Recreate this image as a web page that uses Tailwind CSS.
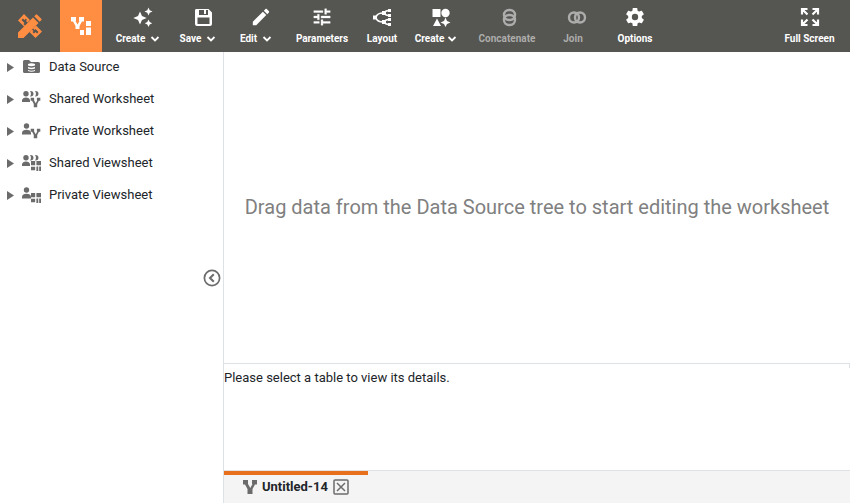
<!DOCTYPE html>
<html lang="en">
<head>
<meta charset="utf-8">
<title>Untitled-14</title>
<script src="https://cdn.jsdelivr.net/npm/@tailwindcss/browser@4"></script>
</head>
<body class="flex h-screen flex-col overflow-hidden bg-white font-[Roboto,sans-serif] text-[13px] leading-5 text-[#212529]">
<svg class="hidden">
  <symbol id="chev" viewBox="0 0 10 6"><path d="M1.500 1 5 4.500 8.500 1" fill="none" stroke="currentColor" stroke-width="1.800"/></symbol>
  <symbol id="person" viewBox="0 0 20 18"><circle cx="4.500" cy="4" r="2.700"/><path d="M0 12.500V11C0 8.800 2 7.800 4.500 7.800S9 8.800 9 11v1.500z"/></symbol>
  <symbol id="people" viewBox="0 0 20 18"><circle cx="4" cy="3.800" r="2.700"/><path d="M0 12v-1.500C0 8.500 2 7.500 4 7.500s4 1 4 3V12zM8 1c2.500-.2 3.500 1 3.500 2.700S10.500 6.600 8 6.400C9.300 5 9.300 2.500 8 1zM13 1c2.500-.2 3.500 1 3.500 2.700s-1 2.900-3.500 2.700c1.300-1.400 1.300-3.900 0-5.400z"/></symbol>
  <symbol id="nodes" viewBox="0 0 16 16"><path d="M1 1h5v4L8.300 9 10.500 5H10V1h5v4.500h-2L10.500 10v5h-5v-5L3 5.500H1z"/></symbol>
  <symbol id="blocks" viewBox="0 0 12 12"><path d="M0 0h5v5H0zM6.500 0H12v5H6.500zM0 7h5v4H0zM6.500 6.500h2.200V12H6.500zM9.800 6.500H12V12H9.800z"/></symbol>
</svg>

<header class="flex h-[52px] shrink-0 bg-[#555552] text-[10px] leading-4 font-bold text-white">
  <a href="#portal" aria-label="Composer home" class="flex w-[60px] items-center justify-center text-[#ff8d42]">
    <svg class="size-6" viewBox="0 0 24 24" fill="currentColor">
      <path d="M6 0 12 6 9.500 8.500 8 7 9 6 7.800 4.800 6.500 6 5 4.500 3.500 6 6.500 9 5.500 10 7 11.500 6 12.500 0 6.500z"/>
      <path d="M18 11.500 24 17.500 17.500 24 11.500 18 14 15.500 15.500 17 14.500 18 16 19.500 17.500 18 19 19.500 20.500 18 17.500 15 16.500 16 15 14.500z"/>
      <path d="M0 24v-5.500L15 3.500 20.500 9 5.500 24zM16.200 2.300l1.600-1.600q.7-.7 1.400 0l4.100 4.100q.7.700 0 1.400l-1.600 1.600z"/>
    </svg>
  </a>
  <button type="button" aria-label="Worksheet" class="flex w-[42px] items-center justify-center bg-[#ff8d42]">
    <svg class="h-[18px] w-5" viewBox="0 0 20 18" fill="currentColor"><path d="M0 0h5v4H4.500L6.500 7.500 8.500 4H8V0h5v4.500h-2L8.500 9v3h-4V9L2 4.500H0zM15 4h5v5h-5zM15 10.500h5V18h-5zM9 13h4v5H9z"/></svg>
  </button>
  <nav aria-label="Worksheet tools" class="ml-[10px] flex">
    <button type="button" class="flex w-[62px] flex-col items-center gap-1 pt-[7px]">
      <svg class="size-5" viewBox="0 0 20 20" fill="currentColor"><path d="M7 4.500l2 4.500 4.700 2L9 13l-2 4.500L5 13 .300 11 5 9zM15.500.5l1.200 2.800 2.800 1.200-2.800 1.200-1.200 2.800-1.200-2.800-2.800-1.200 2.800-1.200zM15.500 12.500l1.200 2.500 2.500 1.200-2.500 1.200-1.200 2.500-1.200-2.500-2.500-1.200 2.500-1.200z"/></svg>
      <span class="flex items-center gap-[5px] pr-[10px]">Create <svg class="h-[6px] w-[10px]"><use href="#chev"/></svg></span>
    </button>
    <button type="button" class="flex w-[58px] flex-col items-center gap-1 pt-[7px]">
      <svg class="size-5" viewBox="0 0 20 20" fill="currentColor" fill-rule="evenodd"><path d="M3 2h12.500L19 5.500V17q0 2-2 2H4q-2 0-2-2V3.500Q2 2 3 2zM6 3v5h9V3h-2v4h-2V3zM4.500 10.500V17h12v-6.500z"/></svg>
      <span class="flex items-center gap-[5px] pr-[10px]">Save <svg class="h-[6px] w-[10px]"><use href="#chev"/></svg></span>
    </button>
    <button type="button" class="flex w-[58px] flex-col items-center gap-1 pt-[7px]">
      <svg class="size-5" viewBox="1 0 22 22" fill="currentColor"><path d="M20.710 6.040c.39-.39.39-1.040 0-1.410l-2.340-2.340c-.37-.39-1.020-.39-1.410 0l-1.840 1.830 3.750 3.750zM3 16.250V20h3.750L17.810 8.930l-3.750-3.750z"/></svg>
      <span class="flex items-center gap-[5px] pr-[10px]">Edit <svg class="h-[6px] w-[10px]"><use href="#chev"/></svg></span>
    </button>
    <button type="button" class="flex w-16 flex-col items-center gap-1 pt-[7px]">
      <svg class="size-5" viewBox="1 1 22 22" fill="currentColor"><path d="M3 17v2h6v-2zM3 5v2h10V5zm10 16v-2h8v-2h-8v-2h-2v6zM7 9v2H3v2h4v2h2V9zm14 4v-2H11v2zm-6-4h2V7h4V5h-4V3h-2z" stroke="currentColor" stroke-width=".4"/></svg>
      <span>Parameters</span>
    </button>
    <button type="button" class="flex w-14 flex-col items-center gap-1 pt-[7px]">
      <svg class="size-5" viewBox="0 0 20 20" fill="currentColor"><path d="M1 8.500h4v4H1zM10 4h4v4h-4zM10 13h4v4h-4zM16 2h3v3h-3zM16 7h3v3h-3zM16 11h3v3h-3zM16 16h3v3h-3z"/><path d="M4 10C5 7 8 6 11 6M4 11c1 3 4 4 7 4M13 6c0-2 1-2.500 4-2.500M13 6c0 2 1 2.500 4 2.500M13 15c0-2 1-2.500 4-2.500M13 15c0 2 1 2.500 4 2.500" fill="none" stroke="currentColor" stroke-width="1.600"/></svg>
      <span>Layout</span>
    </button>
    <button type="button" class="flex w-[62px] flex-col items-center gap-1 pt-[7px]">
      <svg class="size-5" viewBox="0 0 20 20" fill="currentColor"><path d="M1.500 2h8v8h-8zM6 11.500l4 7.500H2zM14.500 10.500l1.500 3.500 3.500 1.500L16 17l-1.500 3-1.500-3-3.500-1.500L13 14z"/><circle cx="14.500" cy="6" r="4.200"/></svg>
      <span class="flex items-center gap-[3px] pr-[10px]">Create <svg class="h-[6px] w-[10px]"><use href="#chev"/></svg></span>
    </button>
    <button type="button" disabled class="flex w-[70px] flex-col items-center gap-1 pt-[7px] text-[#adadab]">
      <svg class="ml-1 size-5" viewBox="0 0 20 20" fill="none" stroke="currentColor" stroke-width="2.400"><rect x="5" y="3" width="11" height="10" rx="5"/><rect x="5" y="8" width="11" height="10" rx="5"/></svg>
      <span>Concatenate</span>
    </button>
    <button type="button" disabled class="flex w-[62px] flex-col items-center gap-1 pt-[7px] text-[#adadab]">
      <svg class="ml-2 size-5" viewBox="0 0 20 20" fill="none" stroke="currentColor" stroke-width="2.400"><rect x="2" y="5.500" width="10" height="10" rx="5"/><rect x="8" y="5.500" width="10" height="10" rx="5"/></svg>
      <span>Join</span>
    </button>
    <button type="button" class="flex w-[62px] flex-col items-center gap-1 pt-[7px]">
      <svg class="size-5" viewBox="1 1 22 22" fill="currentColor"><path d="M12 15.500A3.500 3.500 0 0 1 8.500 12 3.500 3.500 0 0 1 12 8.500a3.500 3.500 0 0 1 3.500 3.500 3.500 3.500 0 0 1-3.500 3.500m7.430-2.530c.04-.32.070-.64.070-.97s-.03-.66-.07-1l2.110-1.630c.19-.15.24-.42.120-.64l-2-3.460c-.12-.22-.39-.31-.61-.22l-2.490 1c-.52-.39-1.060-.73-1.690-.98l-.37-2.650A.506.506 0 0 0 14 2h-4c-.25 0-.46.180-.5.420l-.37 2.650c-.63.250-1.170.590-1.690.980l-2.490-1c-.22-.09-.49 0-.61.220l-2 3.460c-.13.220-.07.490.120.640L4.570 11c-.04.340-.07.670-.07 1s.03.650.070.970l-2.110 1.660c-.19.150-.25.420-.12.640l2 3.460c.12.220.39.300.61.220l2.490-1.010c.52.400 1.060.740 1.690.990l.37 2.650c.04.240.250.420.5.420h4c.25 0 .46-.18.500-.42l.37-2.650c.63-.26 1.170-.59 1.690-.99l2.490 1.010c.22.080.49 0 .61-.22l2-3.460c.12-.22.070-.49-.12-.64z"/></svg>
      <span>Options</span>
    </button>
  </nav>
  <button type="button" class="ml-auto flex w-[81px] flex-col items-center gap-1 pt-[7px]">
    <svg class="size-5" viewBox="0 1 20 20" fill="none" stroke="currentColor" stroke-width="2.200"><path d="M2 8.500V3h5.500M12.500 3H18v5.500M18 13.500V19h-5.500M7.500 19H2v-5.500M2 3l5.500 5.500M18 3l-5.500 5.500M18 19l-5.500-5.500M2 19l5.500-5.500"/></svg>
    <span>Full Screen</span>
  </button>
</header>

<main class="flex min-h-0 flex-1">
  <aside class="flex w-[224px] shrink-0 border-r border-[#dee2e6]">
    <ul class="flex-1 -mt-px whitespace-nowrap [&_button]:flex [&_button]:h-8 [&_button]:w-full [&_button]:items-center [&_button]:gap-[7px] [&_button]:pl-[7px]">
      <li><button type="button"><svg class="h-[9px] w-2" viewBox="0 0 8 9" fill="#6b6b6b"><path d="M0 0l7 4.500L0 9z"/></svg>
        <svg class="h-[18px] w-5" viewBox="0 0 20 18" fill="#6b6b6b"><path d="M2.500 2H7l2 2h7.500Q18 4 18 5.500v8q0 1.500-1.500 1.500h-14Q1 15 1 13.500v-10Q1 2 2.500 2z"/><path d="M6 6q3.500-1.500 7 0v1.500q-3.500 1.500-7 0zM6 9q3.500 1.500 7 0v1.500q-3.500 1.500-7 0zM6 12q3.500 1.500 7 0v1q-3.500 1.500-7 0z" fill="#fff"/></svg>
        <span>Data Source</span></button></li>
      <li><button type="button"><svg class="h-[9px] w-2" viewBox="0 0 8 9" fill="#6b6b6b"><path d="M0 0l7 4.500L0 9z"/></svg>
        <svg class="h-[18px] w-5" viewBox="0 0 20 18" fill="#6b6b6b"><use href="#people"/><use href="#nodes" x="8" y="7" width="11" height="11"/></svg>
        <span>Shared Worksheet</span></button></li>
      <li><button type="button"><svg class="h-[9px] w-2" viewBox="0 0 8 9" fill="#6b6b6b"><path d="M0 0l7 4.500L0 9z"/></svg>
        <svg class="h-[18px] w-5" viewBox="0 0 20 18" fill="#6b6b6b"><use href="#person"/><use href="#nodes" x="8" y="6" width="11" height="11"/></svg>
        <span>Private Worksheet</span></button></li>
      <li><button type="button"><svg class="h-[9px] w-2" viewBox="0 0 8 9" fill="#6b6b6b"><path d="M0 0l7 4.500L0 9z"/></svg>
        <svg class="h-[18px] w-5" viewBox="0 0 20 18" fill="#6b6b6b"><use href="#people"/><use href="#blocks" x="9" y="7" width="10" height="10"/></svg>
        <span>Shared Viewsheet</span></button></li>
      <li><button type="button"><svg class="h-[9px] w-2" viewBox="0 0 8 9" fill="#6b6b6b"><path d="M0 0l7 4.500L0 9z"/></svg>
        <svg class="h-[18px] w-5" viewBox="0 0 20 18" fill="#6b6b6b"><use href="#person"/><use href="#blocks" x="9" y="7" width="10" height="10"/></svg>
        <span>Private Viewsheet</span></button></li>
    </ul>
    <button type="button" aria-label="Collapse tree" class="mr-[2px] self-center text-[#6b6b6b]">
      <svg class="size-[18px]" viewBox="0 0 18 18" fill="none" stroke="currentColor"><circle cx="9" cy="9" r="7.600" stroke-width="1.700"/><path d="M10.800 5.200 7 9l3.800 3.800" stroke-width="2"/></svg>
    </button>
  </aside>

  <div class="flex min-w-0 flex-1 flex-col">
    <section class="flex flex-1 items-center justify-center pb-[2px] text-xl text-[#808080]">
      <p>Drag data from the Data Source tree to start editing the worksheet</p>
    </section>
    <section class="flex h-[107px] items-start justify-between border-t border-[#dee2e6]">
      <p class="pt-1">Please select a table to view its details.</p>
      <div class="h-1 w-px bg-[#dee2e6]"></div>
    </section>
    <footer class="flex h-[33px] border-t border-[#dee2e6] bg-[#f4f4f4]">
      <div class="flex w-36 items-center border-t-4 border-[#e8701c] pb-1 pl-[18px] font-bold">
        <svg class="mr-1 size-4" viewBox="0 0 16 16" fill="#6b6b6b"><use href="#nodes"/></svg>
        <span>Untitled-14</span>
        <button type="button" aria-label="Close Untitled-14" class="ml-[5px] text-[#6b6b6b]">
          <svg class="size-4" viewBox="0 0 16 16" fill="none" stroke="currentColor" stroke-width="1.500"><rect x="1" y="1" width="14" height="14" rx="1"/><path d="M4 4l8 8M12 4l-8 8"/></svg>
        </button>
      </div>
    </footer>
  </div>
</main>
</body>
</html>
